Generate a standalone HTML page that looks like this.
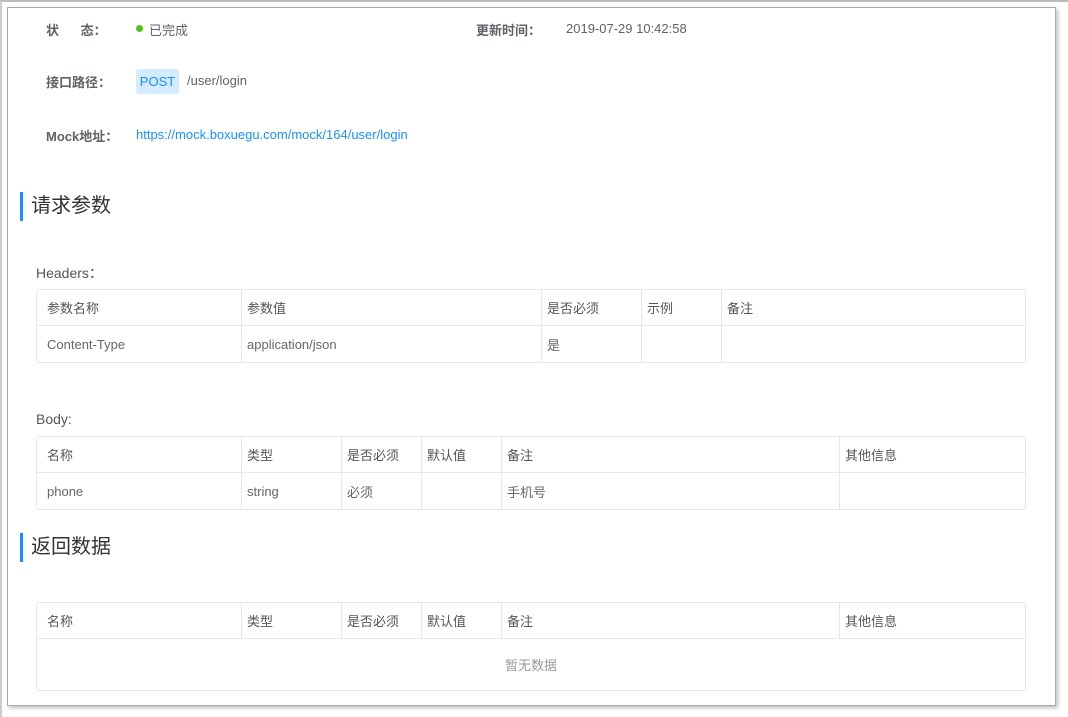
<!DOCTYPE html>
<html><head><meta charset="utf-8"><style>
*{margin:0;padding:0;box-sizing:border-box}
body{width:1068px;height:717px;background:#fff;position:relative;overflow:hidden;font-family:"Liberation Sans","Noto Sans CJK SC",sans-serif;font-size:13px;color:#606266}
.outer{position:absolute;left:0;top:0;width:1068px;height:717px;border-top:2px solid #bbb;border-left:2px solid #ccc}
.frame{position:absolute;left:7px;top:7px;width:1049px;height:699px;border:1px solid #aaa;box-shadow:2px 2px 4px rgba(0,0,0,.25);background:#fff}
.a{position:absolute;white-space:nowrap}
.lbl{font-weight:bold;color:#606266}
.c{font-family:"Noto Sans CJK SC",sans-serif}
.h2{font-size:20px;color:#333;border-left:3px solid #1890ff;padding-left:8px;height:29px;line-height:28px}
.sub{font-size:14px;color:#555}
table{position:absolute;left:36px;width:990px;border-collapse:separate;border-spacing:0;border:1px solid #e8e8e8;border-radius:3px}
td{height:36px;border-right:1px solid #e8e8e8;border-bottom:1px solid #e8e8e8;padding-left:5px;font-size:13px;color:#666}
td:first-child{padding-left:10px}
tr:last-child td{border-bottom:none}
td:last-child{border-right:none}
.hd td{color:#555}
</style></head><body>
<div class="outer"></div>
<div class="frame"></div>
<div class="a lbl" style="left:46px;top:20px">状&nbsp;&nbsp;&nbsp;&nbsp;&nbsp;&nbsp;态<span class="c">：</span></div>
<div class="a" style="left:136px;top:25px;width:7px;height:7px;border-radius:50%;background:#52c41a"></div>
<div class="a" style="left:149px;top:20px">已完成</div>
<div class="a lbl" style="left:476px;top:20px">更新时间<span class="c">：</span></div>
<div class="a" style="left:566px;top:21px">2019-07-29 10:42:58</div>
<div class="a lbl" style="left:46px;top:72px">接口路径<span class="c">：</span></div>
<div class="a" style="left:136px;top:69px;width:43px;height:25px;background:#d4eafd;border-radius:3px;color:#1890ff;text-align:center;line-height:26px">POST</div>
<div class="a" style="left:187px;top:73px">/user/login</div>
<div class="a lbl" style="left:46px;top:126px">Mock地址<span class="c">：</span></div>
<div class="a" style="left:136px;top:127px;color:#1890ff">https://mock.boxuegu.com/mock/164/user/login</div>
<div class="a h2" style="left:20px;top:192px">请求参数</div>
<div class="a sub" style="left:36px;top:263px">Headers<span class="c">：</span></div>
<table style="top:289px"><colgroup><col style="width:205px"><col style="width:300px"><col style="width:100px"><col style="width:80px"><col></colgroup>
<tr class="hd"><td>参数名称</td><td>参数值</td><td>是否必须</td><td>示例</td><td>备注</td></tr>
<tr><td>Content-Type</td><td>application/json</td><td>是</td><td></td><td></td></tr></table>
<div class="a sub" style="left:36px;top:411px">Body:</div>
<table style="top:436px"><colgroup><col style="width:205px"><col style="width:100px"><col style="width:80px"><col style="width:80px"><col style="width:338px"><col></colgroup>
<tr class="hd"><td>名称</td><td>类型</td><td>是否必须</td><td>默认值</td><td>备注</td><td>其他信息</td></tr>
<tr><td>phone</td><td>string</td><td>必须</td><td></td><td>手机号</td><td></td></tr></table>
<div class="a h2" style="left:20px;top:533px">返回数据</div>
<table style="top:602px"><colgroup><col style="width:205px"><col style="width:100px"><col style="width:80px"><col style="width:80px"><col style="width:338px"><col></colgroup>
<tr class="hd"><td>名称</td><td>类型</td><td>是否必须</td><td>默认值</td><td>备注</td><td>其他信息</td></tr>
<tr><td colspan="6" style="height:51px;text-align:center;color:#999;padding:0">暂无数据</td></tr></table>
</body></html>
